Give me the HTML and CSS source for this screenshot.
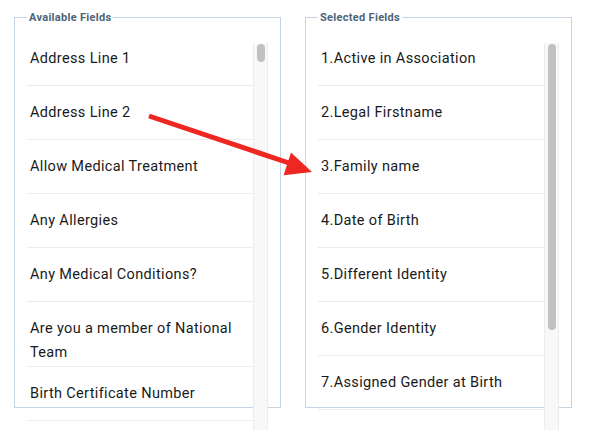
FILE: index.html
```html
<!DOCTYPE html>
<html lang="en">
<head>
<meta charset="utf-8">
<title>Fields</title>
<link rel="stylesheet" href="styles.css">
</head>
<body>
<div class="wrap">
  <fieldset class="panel">
    <legend class="legend">Available Fields</legend>
    <div class="list">
      <div class="rows">
        <div class="row first">Address Line 1</div>
        <div class="row">Address Line 2</div>
        <div class="row">Allow Medical Treatment</div>
        <div class="row">Any Allergies</div>
        <div class="row">Any Medical Conditions?</div>
        <div class="row">Are you a member of National Team</div>
        <div class="row">Birth Certificate Number</div>
        <div class="row"></div>
      </div>
      <div class="track"><div class="thumb thumb-short"></div></div>
    </div>
  </fieldset>
  <fieldset class="panel">
    <legend class="legend">Selected Fields</legend>
    <div class="list">
      <div class="rows">
        <div class="row first">1.Active in Association</div>
        <div class="row">2.Legal Firstname</div>
        <div class="row">3.Family name</div>
        <div class="row">4.Date of Birth</div>
        <div class="row">5.Different Identity</div>
        <div class="row">6.Gender Identity</div>
        <div class="row">7.Assigned Gender at Birth</div>
        <div class="row"></div>
      </div>
      <div class="track"><div class="thumb thumb-long"></div></div>
    </div>
  </fieldset>
</div>
<svg class="arrow" width="598" height="430" viewBox="0 0 598 430" aria-hidden="true">
  <line x1="149" y1="116" x2="289" y2="163" stroke="#ee2722" stroke-width="5" stroke-linecap="butt"/>
  <polygon points="312,172 291,152.5 283.6,175.3" fill="#ee2722"/>
</svg>
</body>
</html>
```
FILE: styles.css
```css
html, body {
  margin: 0;
  padding: 0;
  width: 598px;
  height: 430px;
  overflow: hidden;
  background: #fff;
}
body {
  position: relative;
  font-family: Roboto, "Liberation Sans", sans-serif;
  color: #1a1a1a;
}
.wrap {
  display: flex;
  gap: 24px;
  padding: 11px 0 0 14px;
}
.panel {
  box-sizing: border-box;
  width: 267px;
  height: 397px;
  margin: 0;
  padding: 0 12px;
  border: 1px solid #c6d4e1;
  min-width: 0;
}
.legend {
  padding: 0 2px;
  margin-left: 0;
  font-size: 11px;
  line-height: 13px;
  letter-spacing: 0.3px;
  font-weight: bold;
  color: #4d6378;
}
.list {
  display: flex;
  margin-top: 19px;
  height: 400px;
}
.rows {
  width: 226px;
  flex: none;
}
.row {
  box-sizing: border-box;
  min-height: 54px;
  padding: 15px 3px 1px;
  line-height: 24px;
  font-size: 14.5px;
  letter-spacing: 0.35px;
  border-bottom: 1px solid #ebebeb;
}
.row.first {
  min-height: 43px;
  padding-top: 4px;
}
.track {
  box-sizing: border-box;
  width: 15px;
  flex: none;
  background: #f8f8f8;
  border-left: 1px solid #ececec;
  border-right: 1px solid #ececec;
  padding: 1px 3px 0;
}
.thumb {
  width: 8px;
  background: #c1c1c1;
  border-radius: 4px;
}
.thumb-short { height: 18px; }
.thumb-long { height: 286px; }
.arrow {
  position: absolute;
  left: 0;
  top: 0;
  pointer-events: none;
}
```
